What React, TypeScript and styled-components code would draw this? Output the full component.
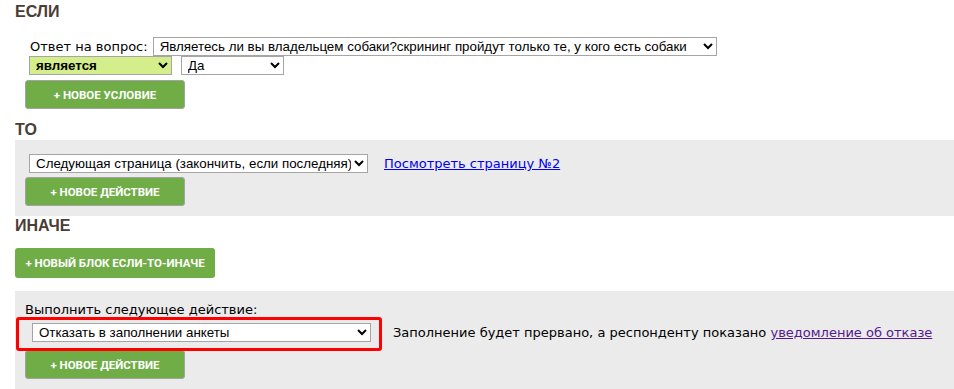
import React from "react";
import styled, { createGlobalStyle } from "styled-components";

const Global = createGlobalStyle`
  html, body { margin: 0; padding: 0; background: #fff; }
  body { font-family: "DejaVu Sans", Verdana, sans-serif; font-size: 13px; color: #000; overflow: hidden; }
`;

const Page = styled.div`
  padding: 2px 0 0 15px;
`;

const Heading = styled.h2<{ $mt?: number }>`
  margin: ${(p) => p.$mt ?? 0}px 0 0 0;
  font-family: "Liberation Sans", Arial, sans-serif;
  font-weight: 700;
  font-size: 16px;
  line-height: 20px;
  color: #4a3d33;
`;

const IfBody = styled.div`
  padding: 15px 0 0 10px;
  display: flex;
  flex-direction: column;
  align-items: flex-start;
`;

const Row = styled.div<{ $gap?: number; $indent?: number }>`
  display: flex;
  align-items: center;
  gap: ${(p) => p.$gap ?? 0}px;
  padding-left: ${(p) => p.$indent ?? 0}px;
`;

const Label = styled.span`
  font-size: 13px;
  line-height: 18px;
  margin-left: 5px;
`;

const Select = styled.select<{ $w: number; $green?: boolean; $bold?: boolean; $ml?: number }>`
  width: ${(p) => p.$w}px;
  height: 19px;
  box-sizing: border-box;
  margin: 0 0 0 ${(p) => p.$ml ?? 0}px;
  padding: 0 0 0 2px;
  border: 1px solid #a5a5a5;
  border-radius: 0;
  background: ${(p) => (p.$green ? "#d3ee8a" : "#fff")};
  font-family: "Liberation Sans", Arial, sans-serif;
  font-size: 13.33px;
  font-weight: ${(p) => (p.$bold ? 700 : 400)};
  color: #000;
`;

const AddButton = styled.button<{ $w: number; $h?: number; $mt?: number; $flat?: boolean }>`
  width: ${(p) => p.$w}px;
  height: ${(p) => p.$h ?? 29}px;
  margin-top: ${(p) => p.$mt ?? 0}px;
  box-sizing: border-box;
  border: ${(p) => (p.$flat ? "none" : "1px solid #a3a3a3")};
  border-radius: 3px;
  background: #70ad47;
  color: #fff;
  font-family: Roboto, "Liberation Sans", sans-serif;
  font-weight: 700;
  font-size: 11.5px;
  text-transform: uppercase;
  padding: 0;
  cursor: pointer;
`;

const Panel = styled.div<{ $pt: number; $pb: number }>`
  background: #ebebeb;
  padding: ${(p) => p.$pt}px 0 ${(p) => p.$pb}px 10px;
  display: flex;
  flex-direction: column;
  align-items: flex-start;
`;

const Link = styled.a<{ $visited?: boolean }>`
  font-size: 13px;
  color: ${(p) => (p.$visited ? "#551a8b" : "#0000ee")};
  text-decoration: underline;
`;

const Note = styled.span`
  font-size: 13px;
  margin-left: 22px;
`;

const ElseLabel = styled.div`
  font-size: 13px;
  line-height: 16px;
  margin-bottom: 5px;
`;

const Highlight = styled.span`
  position: relative;
  display: inline-flex;
  &::after {
    content: "";
    position: absolute;
    left: -16px;
    top: -6px;
    right: -11px;
    bottom: -9px;
    border: 3px solid #ff0000;
    border-radius: 3px;
    pointer-events: none;
  }
`;

const BlockGap = styled.div`
  padding: 12px 0 13px;
`;

export default function App() {
  return (
    <>
      <Global />
      <Page>
        <Heading>ЕСЛИ</Heading>
        <IfBody>
          <Row>
            <Label>Ответ на вопрос:</Label>
            <Select $w={564} $ml={5} defaultValue="q">
              <option value="q">Являетесь ли вы владельцем собаки?скрининг пройдут только те, у кого есть собаки</option>
            </Select>
          </Row>
          <Row $gap={9}>
            <Select $w={143} $ml={4} $green $bold defaultValue="is">
              <option value="is">является</option>
            </Select>
            <Select $w={103} defaultValue="yes">
              <option value="yes">Да</option>
            </Select>
          </Row>
          <AddButton $w={160} $mt={5}>+ Новое условие</AddButton>
        </IfBody>

        <Heading $mt={11}>ТО</Heading>
        <Panel $pt={14} $pb={10}>
          <Row $gap={16}>
            <Select $w={339} $ml={4} defaultValue="next">
              <option value="next">Следующая страница (закончить, если последняя)</option>
            </Select>
            <Link href="#">Посмотреть страницу №2</Link>
          </Row>
          <AddButton $w={160} $mt={4}>+ Новое действие</AddButton>
        </Panel>

        <Heading>ИНАЧЕ</Heading>
        <BlockGap>
          <AddButton $w={200} $h={30} $flat>+ Новый блок если-то-иначе</AddButton>
        </BlockGap>
        <Panel $pt={11} $pb={20}>
          <ElseLabel>Выполнить следующее действие:</ElseLabel>
          <Row $indent={7}>
            <Highlight>
              <Select $w={339} defaultValue="deny">
                <option value="deny">Отказать в заполнении анкеты</option>
              </Select>
            </Highlight>
            <Note>
              Заполнение будет прервано, а респонденту показано{" "}
              <Link href="#" $visited>уведомление об отказе</Link>
            </Note>
          </Row>
          <AddButton $w={160} $mt={8}>+ Новое действие</AddButton>
        </Panel>
      </Page>
    </>
  );
}
